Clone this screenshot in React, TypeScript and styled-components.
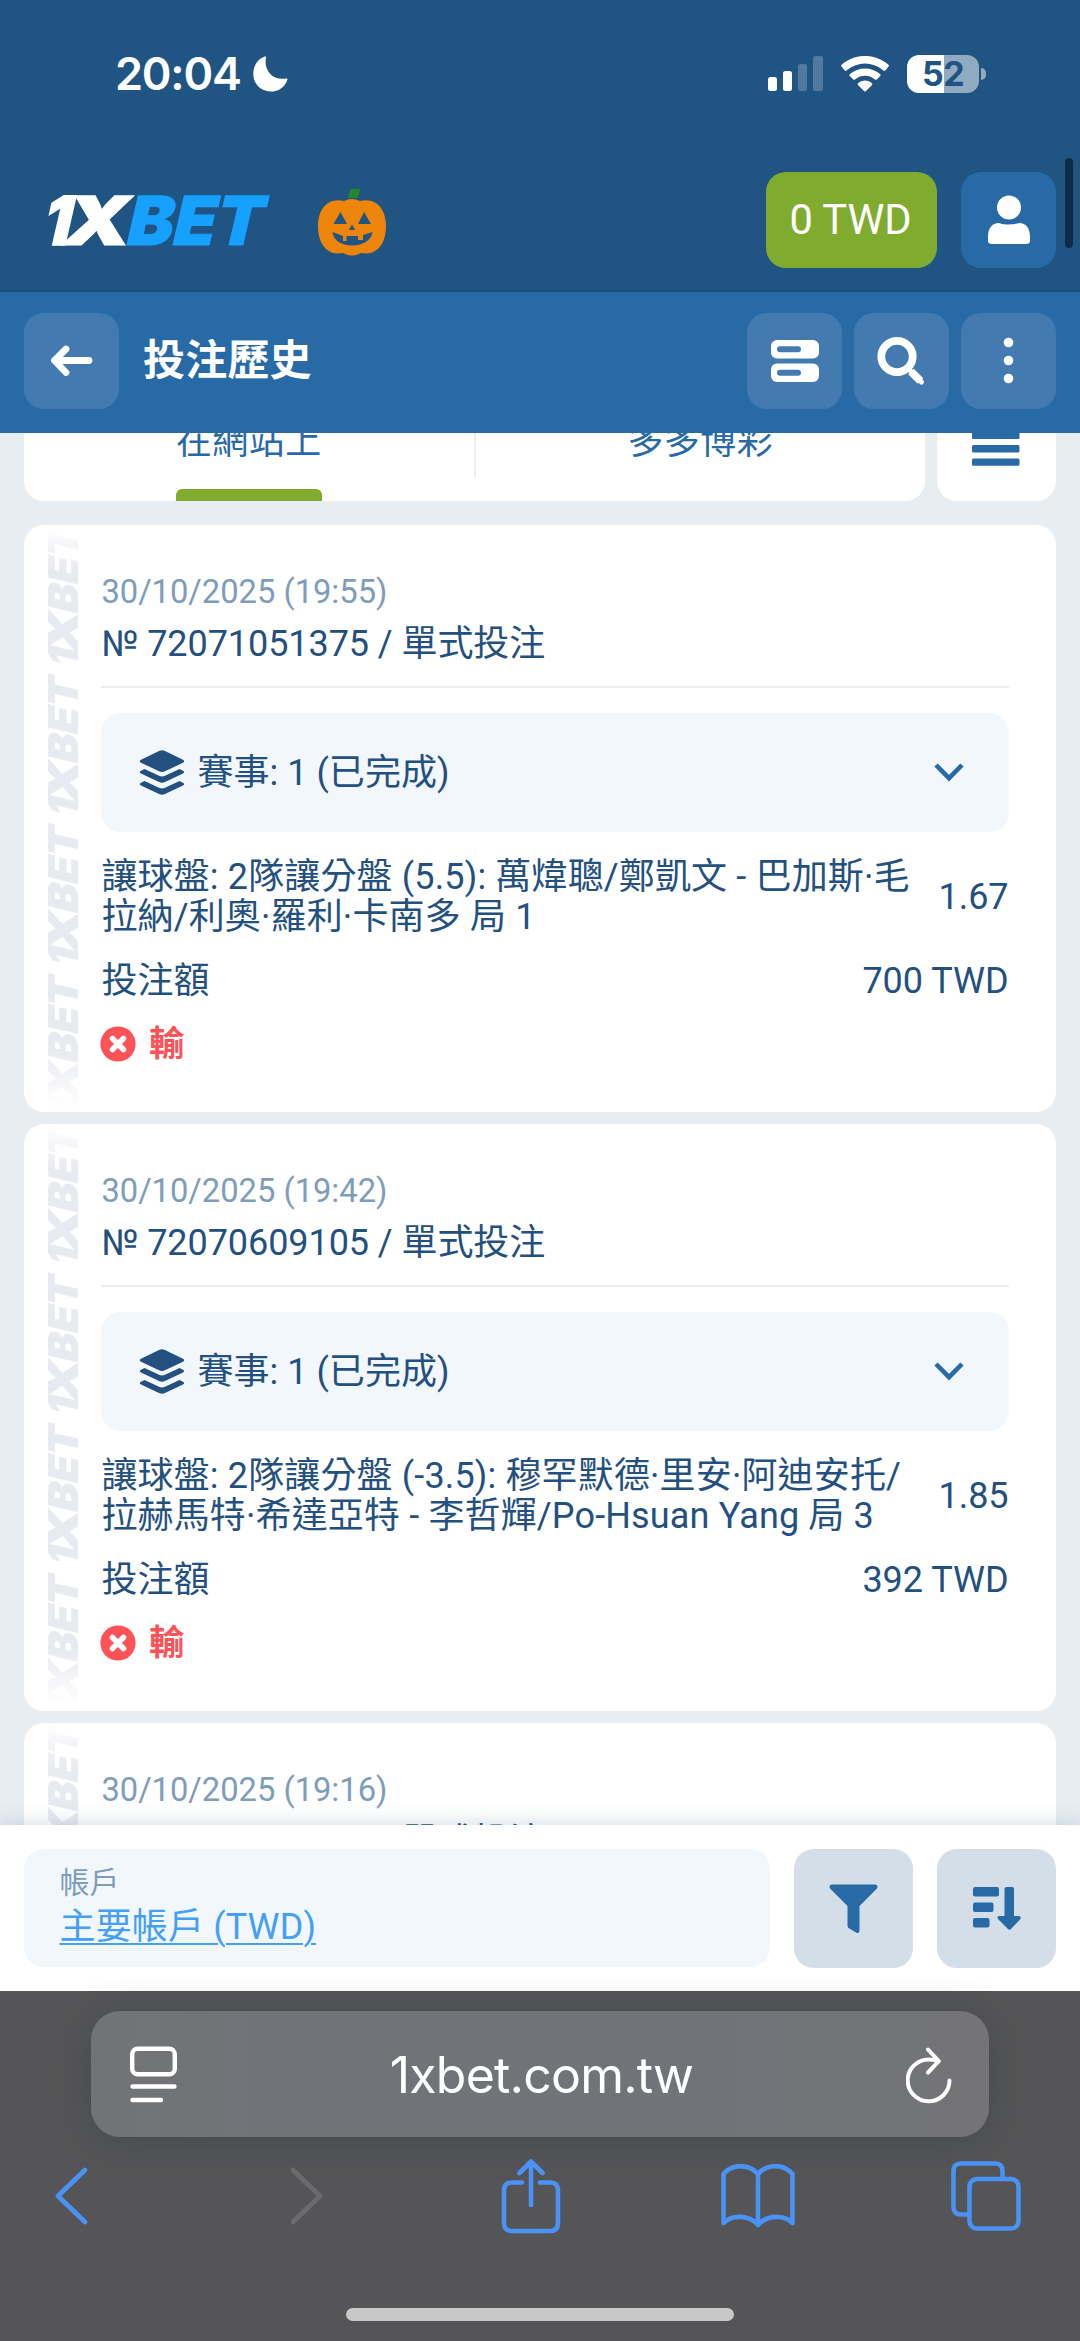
import React from "react";
import styled, { createGlobalStyle } from "styled-components";

const color = {
  header: "#205583",
  primary: "#276aa6",
  primarySoft: "#437bb0",
  green: "#7fac2e",
  page: "#e8edf1",
  panel: "#f2f7fc",
  ink: "#24507f",
  muted: "#7d9dba",
  danger: "#fd5358",
  link: "#459ff5",
  chip: "#d4dee8",
  chrome: "#555557",
  safari: "#4b92f6",
};

const GlobalStyle = createGlobalStyle`
  * { box-sizing: border-box; }
  body { margin: 0; }
  #root { font-family: Roboto, "Noto Sans CJK TC", sans-serif; }
  svg { display: block; flex: none; }
`;

const Screen = styled.div`
  position: relative;
  display: flex;
  flex-direction: column;
  width: 1080px;
  height: 2341px;
  overflow: hidden;
  background: ${color.page};
`;

/* ---------- status bar and site header ---------- */

const StatusBar = styled.div`
  display: flex;
  flex: none;
  justify-content: space-between;
  align-items: center;
  height: 148px;
  padding: 0 94px 1px 115px;
  background: ${color.header};
  color: #fff;
`;

const Clock = styled.div`
  display: flex;
  align-items: center;
  gap: 12px;
  font: 600 45px/60px Inter, sans-serif;
  letter-spacing: -1.2px;
`;

const StatusIcons = styled.div`
  display: flex;
  align-items: center;
  gap: 18px;
`;

const Battery = styled.div`
  display: flex;
  align-items: center;
  gap: 2px;
`;

const BatteryBody = styled.div<{ $level: number }>`
  display: grid;
  place-items: center;
  width: 72px;
  height: 38px;
  border-radius: 12px;
  background: linear-gradient(90deg, #fff ${(p) => p.$level}%, #90aac1 ${(p) => p.$level}%);
  color: ${color.header};
  font: 700 34px/38px Inter, sans-serif;
  letter-spacing: -0.5px;
`;

const BatteryTip = styled.div`
  width: 5px;
  height: 12px;
  border-radius: 0 5px 5px 0;
  background: #90aac1;
`;

const SiteHeader = styled.header`
  display: flex;
  flex: none;
  align-items: center;
  height: 144px;
  padding: 0 24px 0 47px;
  background: ${color.header};
  box-shadow: inset 0 -2px #1c4d74;
`;

const Logo = styled.svg`
  margin-top: 2px;
  overflow: visible;
`;

const Pumpkin = styled.svg`
  margin: 6px 0 0 48px;
`;

const Balance = styled.div`
  display: grid;
  place-items: center;
  width: 171px;
  height: 96px;
  margin-left: auto;
  padding-right: 2px;
  border-radius: 20px;
  background: ${color.green};
  color: #fff;
  font-size: 41.6px;
  line-height: 60px;
`;

const SquareButton = styled.div<{ $tone: string; $large?: boolean }>`
  display: grid;
  flex: none;
  place-items: center;
  width: ${(p) => (p.$large ? 119 : 95)}px;
  height: ${(p) => (p.$large ? 119 : 96)}px;
  border-radius: 20px;
  background: ${(p) => p.$tone};
`;

const Profile = styled(SquareButton)`
  margin-left: 24px;
`;

const ScrollThumb = styled.div`
  position: absolute;
  top: 158px;
  right: 7px;
  width: 8px;
  height: 90px;
  border-radius: 4px;
  background: #0e2b47;
`;

/* ---------- toolbar ---------- */

const Toolbar = styled.div`
  display: flex;
  flex: none;
  align-items: center;
  gap: 12px;
  height: 141px;
  padding: 0 24px 3px;
  background: ${color.primary};
`;

const Title = styled.h1`
  flex: 1;
  margin: 0 0 0 12px;
  color: #fff;
  font-size: 42px;
  font-weight: 700;
  letter-spacing: 0.2px;
  line-height: 60px;
`;

/* ---------- scrolled content ---------- */

const Content = styled.main`
  flex: 1;
  min-height: 0;
  overflow: hidden;
  padding: 0 24px;
`;

const Tabs = styled.div`
  display: flex;
  gap: 12px;
  height: 119px;
  margin-top: -51px;
`;

const TabGroup = styled.div`
  display: grid;
  grid-template-columns: 1fr 2px 1fr;
  width: 901px;
  border-radius: 20px;
  background: #fff;
`;

const TabDivider = styled.div`
  margin: 24px 0;
  background: #eaeef0;
`;

const Tab = styled.div<{ $active?: boolean }>`
  position: relative;
  display: flex;
  align-items: center;
  justify-self: center;
  color: ${color.primary};
  font-size: 36px;
  letter-spacing: 0.4px;
  line-height: 44px;
  &::after {
    content: "";
    position: absolute;
    inset: auto 0 0;
    display: ${(p) => (p.$active ? "block" : "none")};
    height: 12px;
    border-radius: 6px 6px 0 0;
    background: ${color.green};
  }
`;

const MenuCard = styled.div`
  display: grid;
  flex: 1;
  place-items: center;
  padding-right: 2px;
  border-radius: 20px;
  background: #fff;
`;

const Coupon = styled.article`
  display: flex;
  height: 587px;
  margin-top: 12px;
  padding-left: 24px;
  border-radius: 20px;
  background: #fff;
  &:first-of-type {
    margin-top: 24px;
  }
`;

const Watermark = styled.svg`
  -webkit-mask-image: linear-gradient(transparent 0, #000 45px, #000 525px, transparent 582px);
  mask-image: linear-gradient(transparent 0, #000 45px, #000 525px, transparent 582px);
`;

const CouponBody = styled.div`
  flex: 1;
  padding: 47px 47.4px 0 23.4px;
  color: ${color.ink};
  font-size: 36px;
  line-height: 40px;
`;

const CouponDate = styled.div`
  color: ${color.muted};
  font-size: 32.7px;
`;

const CouponNumber = styled.div`
  height: 76px;
  padding-top: 11.5px;
  border-bottom: 2px solid #ebeef0;
  letter-spacing: -0.07px;
`;

const Events = styled.div`
  display: flex;
  align-items: center;
  gap: 12px;
  height: 119px;
  margin-top: 25px;
  padding: 0 45px 0 38px;
  border-radius: 20px;
  background: ${color.panel};
  letter-spacing: 0.05px;
  svg:last-child {
    margin-left: auto;
  }
`;

const Line = styled.div`
  display: flex;
  align-items: center;
  justify-content: space-between;
`;

const BetLine = styled(Line)`
  margin: 25px 0 24px;
`;

const BetName = styled.div`
  width: 820px;
  letter-spacing: 0.15px;
  white-space: pre-line;
`;

const Result = styled.div`
  display: flex;
  align-items: center;
  gap: 13px;
  margin: 23px 0 0 -1.5px;
  color: ${color.danger};
  font-size: 35.5px;
  font-weight: 700;
`;

/* ---------- account bar ---------- */

const AccountBar = styled.div`
  position: relative;
  display: flex;
  flex: none;
  gap: 24px;
  height: 166px;
  padding: 24px;
  background: #fff;
  box-shadow: 0 0 20px rgba(60, 100, 140, 0.25);
`;

const AccountBox = styled.div`
  flex: 1;
  padding: 14px 35.5px;
  border-radius: 20px;
  background: ${color.panel};
`;

const AccountLabel = styled.div`
  color: ${color.muted};
  font-size: 30px;
  line-height: 40px;
`;

const AccountLink = styled.div`
  color: ${color.link};
  font-size: 36px;
  letter-spacing: 0.15px;
  line-height: 48px;
  text-decoration: underline;
  text-decoration-thickness: 2px;
  text-underline-offset: 4px;
`;

/* ---------- browser chrome ---------- */

const Chrome = styled.footer`
  position: relative;
  display: flex;
  flex: none;
  flex-direction: column;
  align-items: center;
  height: 350px;
  padding-top: 20px;
  background: ${color.chrome};
`;

const AddressBar = styled.div`
  display: flex;
  align-items: center;
  justify-content: space-between;
  width: 898px;
  height: 126px;
  padding: 1px 37px 0 39px;
  border-radius: 29px;
  background: linear-gradient(90deg, #727375, #707478 20%, #707478 70%, #747476);
  box-shadow: 0 4px 36px rgba(50, 60, 68, 0.45);
  color: #fff;
  font: 400 50px/70px Inter, sans-serif;
  letter-spacing: -0.8px;
`;

const ChromeActions = styled.div`
  display: grid;
  grid-template-columns: 236px 212px 220px 230px 70px;
  align-items: center;
  width: 100%;
  height: 118px;
  padding-left: 53px;
`;

const HomeIndicator = styled.div`
  width: 388px;
  height: 13px;
  margin-top: 53px;
  border-radius: 7px;
  background: #c8c8c8;
`;

/* ---------- drawings ---------- */

const BrandText = styled.text`
  font-family: Inter, sans-serif;
  font-weight: 900;
  font-size: 67.5px;
`;

function Brand({ one, bet }: { one: string; bet: string }) {
  return (
    <BrandText transform="skewX(-13)">
      <tspan x="4" y="49" fill={one} stroke={one} strokeWidth="1.500" textLength="28" lengthAdjust="spacingAndGlyphs">1</tspan>
      <tspan x="24" y="49" fill={one} stroke={one} strokeWidth="1" textLength="67" lengthAdjust="spacingAndGlyphs">X</tspan>
      <tspan x="88" y="49" fill={bet} stroke={bet} strokeWidth="1" textLength="136" lengthAdjust="spacingAndGlyphs">BET</tspan>
    </BrandText>
  );
}

const WATERMARK = "#e8eaf1";

function CouponMark() {
  return (
    <Watermark width="30" height="587" viewBox="0 0 30 587">
      {[0, 1, 2, 3].map((i) => (
        <g key={i} transform={`translate(0 ${138.500 + i * 149.8}) rotate(-90) scale(0.628 0.61)`}>
          <Brand one={WATERMARK} bet={WATERMARK} />
        </g>
      ))}
    </Watermark>
  );
}

function Layers() {
  return (
    <svg width="46" height="46" viewBox="0 0 46 46" fill={color.ink}>
      <path d="M20 1Q23-.6 26 1L44 9.700Q46.500 11.200 44 12.700L26 21.300Q23 22.800 20 21.300L2 12.700Q-.5 11.200 2 9.700Z" />
      <path d="M5.500 19 20 25.800Q23 27.200 26 25.800L40.500 19 44 20.700Q46.500 22 44 23.500L26 32Q23 33.500 20 32L2 23.500Q-.5 22 2 20.700Z" />
      <path d="M5.500 31 20 37.800Q23 39.200 26 37.800L40.500 31 44 32.700Q46.500 34 44 35.500L26 44Q23 45.500 20 44L2 35.500Q-.5 34 2 32.700Z" />
    </svg>
  );
}

interface CouponData {
  date: string;
  number: string;
  bet: string;
  odds: string;
  stake: string;
}

const coupons: CouponData[] = [
  {
    date: "30/10/2025 (19:55)",
    number: "72071051375",
    bet: "讓球盤: 2隊讓分盤 (5.5): 萬煒聰/鄭凱文 - 巴加斯·毛\n拉納/利奧·羅利·卡南多 局 1",
    odds: "1.67",
    stake: "700 TWD",
  },
  {
    date: "30/10/2025 (19:42)",
    number: "72070609105",
    bet: "讓球盤: 2隊讓分盤 (-3.5): 穆罕默德·里安·阿迪安托/\n拉赫馬特·希達亞特 - 李哲輝/Po-Hsuan Yang 局 3",
    odds: "1.85",
    stake: "392 TWD",
  },
];

function CouponCard({ data }: { data: CouponData }) {
  return (
    <Coupon>
      <CouponMark />
      <CouponBody>
        <CouponDate>{data.date}</CouponDate>
        <CouponNumber>№ {data.number} / 單式投注</CouponNumber>
        <Events>
          <Layers />
          <span>賽事: 1 (已完成)</span>
          <svg width="30" height="19" viewBox="0 0 30 19" fill="none" stroke={color.primary} strokeWidth="4.600">
            <path d="M2 2 15 15.200 28 2" />
          </svg>
        </Events>
        <BetLine>
          <BetName>{data.bet}</BetName>
          <span>{data.odds}</span>
        </BetLine>
        <Line>
          <span>投注額</span>
          <span>{data.stake}</span>
        </Line>
        <Result>
          <svg width="36" height="36" viewBox="0 0 36 36">
            <circle cx="18" cy="18" r="17.600" fill={color.danger} />
            <path d="M12.500 12.500 23.500 23.500M23.500 12.500 12.500 23.500" stroke="#fff" strokeWidth="5.500" strokeLinecap="round" />
          </svg>
          <span>輸</span>
        </Result>
      </CouponBody>
    </Coupon>
  );
}

export default function App() {
  return (
    <Screen>
      <GlobalStyle />
      <StatusBar>
        <Clock>
          <span>20:04</span>
          <svg width="35" height="36" viewBox="0 0 35 36" fill="#fff">
            <path d="M11.500.6Q13.500-.2 13 2C10.500 13 19 25 33 22.500Q35 22 34.300 24C31.500 31.500 25.500 35.600 18 35.600 8 35.600.3 28 .3 18 .3 10 4.500 3.500 11.500.6Z" />
          </svg>
        </Clock>
        <StatusIcons>
          <svg width="55" height="36" viewBox="0 0 55 36" fill="#fff">
            <rect x="0" y="21" width="9" height="14" rx="2.500" />
            <rect x="15" y="15" width="9" height="20" rx="2.500" />
            <rect x="30" y="8" width="9" height="27" rx="2.500" opacity=".22" />
            <rect x="45" y="0" width="10" height="35" rx="2.500" opacity=".22" />
          </svg>
          <svg width="48" height="36" viewBox="0 0 48 36" fill="#fff">
            <path d="M.6 10.800Q-.4 9.800.6 8.800C14-3 34-3 47.400 8.800Q48.400 9.800 47.400 10.800L44.500 14.300Q43.500 15.500 42.200 14.300C31 5.300 17 5.300 5.800 14.300Q4.500 15.500 3.500 14.300Z" />
            <path d="M8.700 18.300C17.500 10.500 30.500 10.500 39.300 18.300Q40 19 39.300 19.900L36 23.300Q35 24.300 33.700 23.300C28 18.700 20 18.700 14.300 23.300Q13 24.300 12 23.300L8.700 19.900Q8 19 8.700 18.300Z" />
            <path d="M17 27.200C21 23.700 27 23.700 31 27.200Q31.800 28 31 28.900L25 35Q24 36 23 35L17 28.900Q16.200 28 17 27.200Z" />
          </svg>
          <Battery>
            <BatteryBody $level={51}>52</BatteryBody>
            <BatteryTip />
          </Battery>
        </StatusIcons>
      </StatusBar>

      <SiteHeader>
        <Logo width="222" height="50" viewBox="0 0 222 50">
          <Brand one="#fff" bet="#16a0ff" />
        </Logo>
        <Pumpkin width="70" height="68" viewBox="0 0 70 68">
          <path d="M34 0h9l-2 9h-10Z" fill="#25872b" />
          <path
            fill="#ee850b"
            fillRule="evenodd"
            d="M27 12Q35 8 43 12C59 8 69 20 69 37 69 56 59 67 44 64Q35 69 26 64C11 67 1 56 1 37 1 20 11 8 27 12ZM23.500 23 16.500 35H30ZM47 23 41 35H54ZM35 35.500 32 41H38ZM15.500 43C17 61 53 61 55.500 43L46 46V51H41V47H29.500V52H26V47Z"
          />
        </Pumpkin>
        <Balance>0 TWD</Balance>
        <Profile $tone={color.primary}>
          <svg width="44" height="50" viewBox="0 0 44 50" fill="#fff">
            <circle cx="22" cy="12.500" r="12" />
            <path d="M1 42C1 33 5 28 12 28 18 30 26 30 32 28 39 28 43 33 43 42V46Q43 49 39 49H5Q1 49 1 46Z" />
          </svg>
        </Profile>
      </SiteHeader>

      <Toolbar>
        <SquareButton $tone={color.primarySoft}>
          <svg width="42" height="32" viewBox="0 0 42 32" fill="none" stroke="#fff" strokeWidth="6.800" strokeLinecap="round" strokeLinejoin="round">
            <path d="M38 15.500H5.500M15 4 3.500 15.500 15 27.500" />
          </svg>
        </SquareButton>
        <Title>投注歷史</Title>
        <SquareButton $tone={color.primarySoft}>
          <svg width="48" height="42" viewBox="0 0 48 42">
            <rect width="48" height="18.500" rx="6" fill="#fff" />
            <rect y="23.500" width="48" height="18.500" rx="6" fill="#fff" />
            <rect x="6" y="6.300" width="24" height="6" rx="3" fill={color.primarySoft} />
            <rect x="6" y="29.800" width="24" height="6" rx="3" fill={color.primarySoft} />
          </svg>
        </SquareButton>
        <SquareButton $tone={color.primarySoft}>
          <svg width="50" height="50" viewBox="0 0 50 50" fill="none" stroke="#fff">
            <circle cx="20" cy="20.500" r="15.700" strokeWidth="7.800" />
            <path d="M34 35.500 43.500 45" strokeWidth="8" />
            <path d="M34 35.500 44.500 46" strokeWidth="5" strokeLinecap="round" />
          </svg>
        </SquareButton>
        <SquareButton $tone={color.primarySoft}>
          <svg width="12" height="48" viewBox="0 0 12 48" fill="#fff">
            <circle cx="5.500" cy="5.500" r="4.800" />
            <circle cx="5.500" cy="23.500" r="4.800" />
            <circle cx="5.500" cy="41.500" r="4.800" />
          </svg>
        </SquareButton>
      </Toolbar>

      <Content>
        <Tabs>
          <TabGroup>
            <Tab $active>在網站上</Tab>
            <TabDivider />
            <Tab>多多博彩</Tab>
          </TabGroup>
          <MenuCard>
            <svg width="48" height="48" viewBox="0 0 48 48" fill={color.primary}>
              {[0, 13.5, 27, 40.4].map((y) => (
                <rect key={y} y={y} width="47.500" height="7.400" rx="1.500" />
              ))}
            </svg>
          </MenuCard>
        </Tabs>
        {coupons.map((c) => (
          <CouponCard key={c.number} data={c} />
        ))}
        <Coupon>
          <CouponMark />
          <CouponBody>
            <CouponDate>30/10/2025 (19:16)</CouponDate>
            <CouponNumber>№ 72069758231 / 單式投注</CouponNumber>
          </CouponBody>
        </Coupon>
      </Content>

      <AccountBar>
        <AccountBox>
          <AccountLabel>帳戶</AccountLabel>
          <AccountLink>主要帳戶 (TWD)</AccountLink>
        </AccountBox>
        <SquareButton $tone={color.chip} $large>
          <svg width="49" height="50" viewBox="0 0 49 50" fill={color.primary}>
            <path d="M2.500.5H46.500Q50 1.500 47.500 5L30.500 22V47Q30 50 27 48.500L19.500 44Q18.500 43 18.500 41V22L1.500 5Q-1 1.500 2.500.5Z" />
          </svg>
        </SquareButton>
        <SquareButton $tone={color.chip} $large>
          <svg width="48" height="44" viewBox="0 0 48 44" fill={color.primary}>
            <rect y="0" width="26" height="9.500" rx="2" />
            <rect y="15.500" width="20.500" height="9.500" rx="2" />
            <rect y="31" width="16.500" height="9.500" rx="2" />
            <path d="M31.500 2Q31.500 0 33.500 0H39Q41 0 41 2V29H46Q49 30 47 32.500L38 42Q36.500 43.500 35 42L25.500 32.500Q23 30 26 29H31.500Z" />
          </svg>
        </SquareButton>
      </AccountBar>

      <Chrome>
        <AddressBar>
          <svg width="47" height="58" viewBox="0 0 47 58" fill="none" stroke="#fff" strokeWidth="4.400" strokeLinecap="round">
            <rect x="2.200" y="2.700" width="42.600" height="25.500" rx="5.500" />
            <path d="M2.500 40.500H44.500M2.500 54H31" />
          </svg>
          <span>1xbet.com.tw</span>
          <svg width="46" height="58" viewBox="0 0 46 58" fill="none" stroke="#fff" strokeWidth="4" strokeLinecap="round" strokeLinejoin="round">
            <path d="M43.500 34.500A20.900 20.900 0 1 1 22.500 13.500Q27.500 13.500 31.500 15M22 3.500 32.800 15.200 22 26.500" />
          </svg>
        </AddressBar>
        <ChromeActions>
          <svg width="36" height="60" viewBox="0 0 36 60" fill="none" stroke={color.safari} strokeWidth="4.800" strokeLinecap="round" strokeLinejoin="round">
            <path d="M32 4 5 30 32 56" />
          </svg>
          <svg width="36" height="60" viewBox="0 0 36 60" fill="none" stroke="#6b6b6d" strokeWidth="4.800" strokeLinecap="round" strokeLinejoin="round">
            <path d="M4 4 31 30 4 56" />
          </svg>
          <svg width="60" height="76" viewBox="0 0 60 76" fill="none" stroke={color.safari} strokeWidth="4.600" strokeLinecap="round" strokeLinejoin="round">
            <path d="M21 24.500H11Q3 24.500 3 32.500V65Q3 73 11 73H49Q57 73 57 65V32.500Q57 24.500 49 24.500H39M30 47V3.500M18.500 15 30 3.500 41.500 15" />
          </svg>
          <svg width="74" height="64" viewBox="0 0 74 64" fill="none" stroke={color.safari} strokeWidth="4.600" strokeLinecap="round" strokeLinejoin="round">
            <path d="M37 10C28-.5 11-.5 2.500 10V59C11 50.500 28 50.500 37 61 46 50.500 63 50.500 71.500 59V10C63-.5 46-.5 37 10V60" />
          </svg>
          <svg width="70" height="70" viewBox="0 0 70 70" fill="none" stroke={color.safari} strokeWidth="4.600">
            <path d="M18 53.500H10Q2.500 53.500 2.500 46V10Q2.500 2.500 10 2.500H44Q51.500 2.500 51.500 10V18" />
            <rect x="18.500" y="18" width="49" height="49.500" rx="7.500" />
          </svg>
        </ChromeActions>
        <HomeIndicator />
      </Chrome>
      <ScrollThumb />
    </Screen>
  );
}
